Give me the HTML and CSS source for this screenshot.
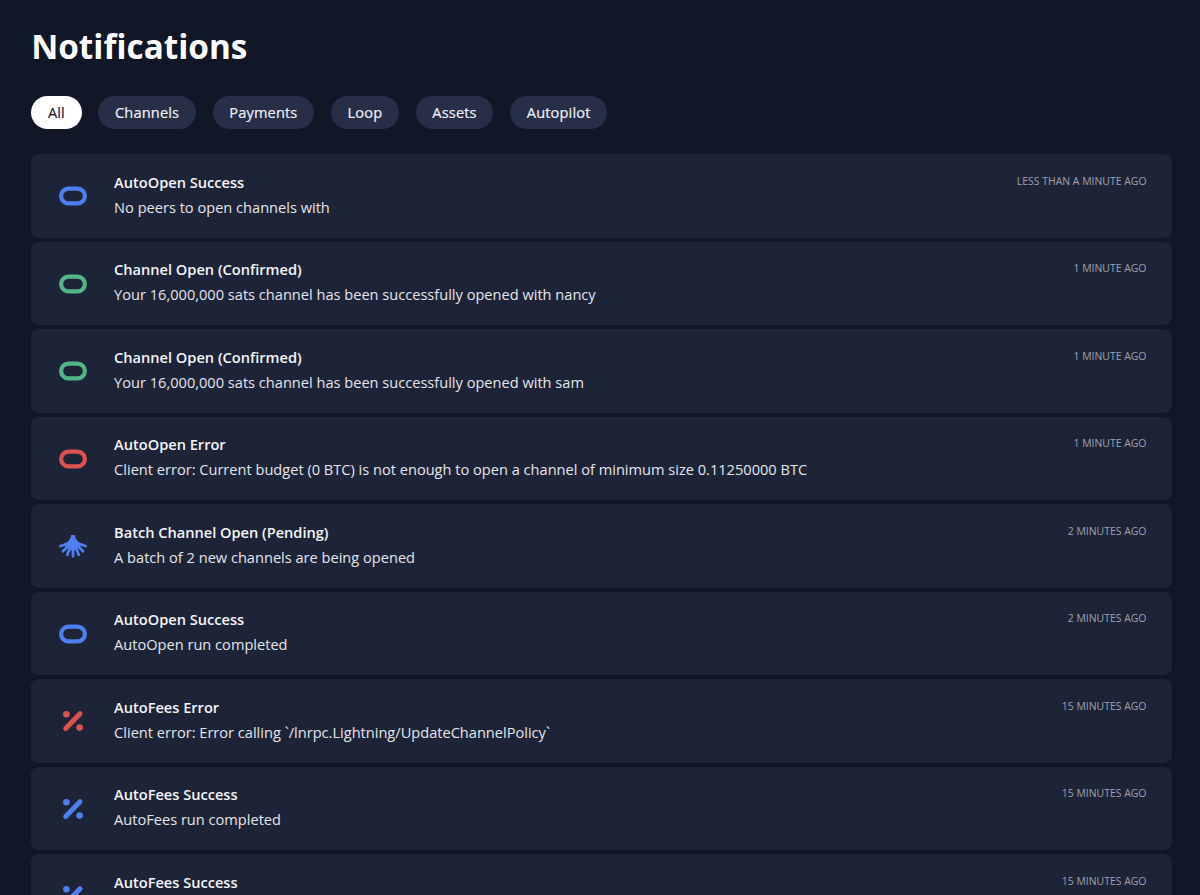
FILE: index.html
```html
<!DOCTYPE html>
<html lang="en">
<head>
    <meta charset="UTF-8">
    <meta name="viewport" content="width=device-width, initial-scale=1.0">
    <title>Notifications</title>
    <link rel="stylesheet" href="styles.css">
</head>
<body>

<!-- Shared icons -->
<svg class="icon-defs" aria-hidden="true">
    <symbol id="icon-channel" viewBox="0 0 28 28">
        <rect x="2.1" y="6.6" width="23.8" height="14.8" rx="7.4" fill="none" stroke="currentColor" stroke-width="4.2"/>
    </symbol>
    <symbol id="icon-batch" viewBox="0 0 28 28">
        <path d="M12 3h4c0 4 3 7.500 8 9L20 15.500l-6 4-6-4-4-3.500c5-1.500 8-5 8-9z" fill="currentColor"/>
        <path d="M14 5v19.300M14 8L8.300 22.700M14 8l5.700 14.700M14 9L4 19.200M14 9l10 10.200M10 11.500L1.500 14M18 11.500l8.500 2.500" fill="none" stroke="currentColor" stroke-width="2.800" stroke-linecap="round"/>
    </symbol>
    <symbol id="icon-fees" viewBox="0 0 28 28">
        <path d="M6.700 21.500L21 6.700" stroke="currentColor" stroke-width="5" stroke-linecap="round"/>
        <circle cx="7.400" cy="7.300" r="3.300" fill="currentColor"/>
        <circle cx="20.600" cy="20.600" r="3.300" fill="currentColor"/>
    </symbol>
</svg>

<h1>Notifications</h1>

<nav class="filters">
    <button class="filter active">All</button>
    <button class="filter">Channels</button>
    <button class="filter">Payments</button>
    <button class="filter">Loop</button>
    <button class="filter">Assets</button>
    <button class="filter">Autopilot</button>
</nav>

<div class="notifications">
    <div class="notification">
        <svg class="icon info"><use href="#icon-channel"/></svg>
        <div class="content">
            <h2>AutoOpen Success</h2>
            <p>No peers to open channels with</p>
        </div>
        <span class="time">Less than a minute ago</span>
    </div>
    <div class="notification">
        <svg class="icon success"><use href="#icon-channel"/></svg>
        <div class="content">
            <h2>Channel Open (Confirmed)</h2>
            <p>Your 16,000,000 sats channel has been successfully opened with nancy</p>
        </div>
        <span class="time">1 minute ago</span>
    </div>
    <div class="notification">
        <svg class="icon success"><use href="#icon-channel"/></svg>
        <div class="content">
            <h2>Channel Open (Confirmed)</h2>
            <p>Your 16,000,000 sats channel has been successfully opened with sam</p>
        </div>
        <span class="time">1 minute ago</span>
    </div>
    <div class="notification">
        <svg class="icon error"><use href="#icon-channel"/></svg>
        <div class="content">
            <h2>AutoOpen Error</h2>
            <p>Client error: Current budget (0 BTC) is not enough to open a channel of minimum size 0.11250000 BTC</p>
        </div>
        <span class="time">1 minute ago</span>
    </div>
    <div class="notification">
        <svg class="icon info"><use href="#icon-batch"/></svg>
        <div class="content">
            <h2>Batch Channel Open (Pending)</h2>
            <p>A batch of 2 new channels are being opened</p>
        </div>
        <span class="time">2 minutes ago</span>
    </div>
    <div class="notification">
        <svg class="icon info"><use href="#icon-channel"/></svg>
        <div class="content">
            <h2>AutoOpen Success</h2>
            <p>AutoOpen run completed</p>
        </div>
        <span class="time">2 minutes ago</span>
    </div>
    <div class="notification">
        <svg class="icon error"><use href="#icon-fees"/></svg>
        <div class="content">
            <h2>AutoFees Error</h2>
            <p>Client error: Error calling `/lnrpc.Lightning/UpdateChannelPolicy`</p>
        </div>
        <span class="time">15 minutes ago</span>
    </div>
    <div class="notification">
        <svg class="icon info"><use href="#icon-fees"/></svg>
        <div class="content">
            <h2>AutoFees Success</h2>
            <p>AutoFees run completed</p>
        </div>
        <span class="time">15 minutes ago</span>
    </div>
    <div class="notification">
        <svg class="icon info"><use href="#icon-fees"/></svg>
        <div class="content">
            <h2>AutoFees Success</h2>
        </div>
        <span class="time">15 minutes ago</span>
    </div>
</div>

</body>
</html>
```
FILE: styles.css
```css
* {
    box-sizing: border-box;
}
body {
    height: 100vh;
    margin: 0;
    padding: 24px 28.5px 0 31.2px;
    overflow: hidden;
    background-color: #111726;
    color: #f5f5f7;
    font-family: "Open Sans", "Noto Sans", sans-serif;
    font-size: 14.6px;
}
h1 {
    margin: 0 0 27.2px;
    color: #fff;
    font-size: 33.3px;
    font-weight: 700;
    line-height: 45px;
}
.filters {
    display: flex;
    gap: 16.7px;
    margin-bottom: 25px;
}
.filter {
    height: 33.3px;
    padding: 0 16.7px;
    border: none;
    border-radius: 17px;
    background: #262e48;
    color: #f0f1f5;
    font-family: inherit;
    font-size: 14.6px;
    letter-spacing: 0.15px;
    line-height: 33px;
    -webkit-text-stroke: 0.2px currentColor;
}
.filter.active {
    background: #fff;
    color: #1e2438;
}
.notifications {
    display: flex;
    flex-direction: column;
    gap: 4.2px;
}
.notification {
    display: flex;
    flex-shrink: 0;
    height: 83.3px;
    padding: 15.2px 25px 0 27.8px;
    border-radius: 8px;
    background: #1e2438;
}
.icon-defs {
    display: none;
}
.icon {
    flex-shrink: 0;
    width: 28px;
    height: 28px;
    margin: 12.7px 27.1px 0 0;
}
.icon.info {
    color: #4f7fef;
}
.icon.success {
    color: #52b587;
}
.icon.error {
    color: #dc524f;
}
.content {
    flex: 1;
}
.content h2,
.content p {
    margin: 0;
    font-size: 14.6px;
    line-height: 25px;
}
.content h2 {
    font-weight: 600;
}
.content p {
    color: #e4e5ea;
}
.time {
    margin-top: 1px;
    color: #9ea1ad;
    font-size: 10.45px;
    line-height: 20px;
    text-transform: uppercase;
}
```
